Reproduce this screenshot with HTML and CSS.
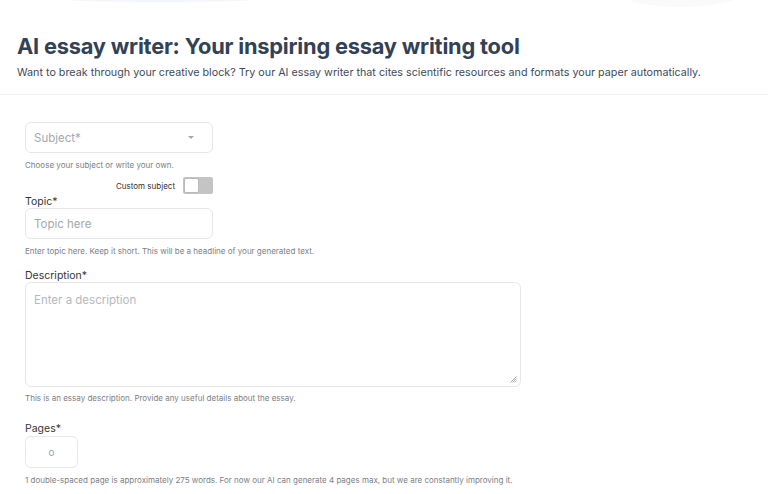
FILE: index.html
```html
<!DOCTYPE html>
<html lang="en">
<head>
<meta charset="utf-8">
<title>AI essay writer</title>
<link rel="stylesheet" href="styles.css">
</head>
<body>
<header class="hero">
  <h1 class="title">AI essay writer: Your inspiring essay writing tool</h1>
  <p class="lead">Want to break through your creative block? Try our AI essay writer that cites scientific resources and formats your paper automatically.</p>
</header>
<main class="form">
  <div class="field">
    <div class="select">
      <span class="placeholder">Subject*</span>
      <svg class="caret" width="6" height="3" viewBox="0 0 6 3"><path d="M0 0h6L3 3z" fill="#a3a7ad"/></svg>
    </div>
    <p class="hint">Choose your subject or write your own.</p>
  </div>
  <div class="toggle-row">
    <span class="toggle-label">Custom subject</span>
    <span class="toggle"><span class="knob"></span></span>
  </div>
  <div class="field">
    <label class="label label-tight">Topic*</label>
    <div class="input"><span class="placeholder">Topic here</span></div>
    <p class="hint">Enter topic here. Keep it short. This will be a headline of your generated text.</p>
  </div>
  <div class="field">
    <label class="label">Description*</label>
    <div class="textarea">
      <span class="placeholder">Enter a description</span>
      <svg class="grip" width="7" height="7" viewBox="0 0 7 7"><path d="M6.5 0.5L0.5 6.5M6.5 2.5L2.5 6.5M6.5 4.5L4.5 6.5" stroke="#a0a0a0" stroke-width="0.9"/></svg>
    </div>
    <p class="hint">This is an essay description. Provide any useful details about the essay.</p>
  </div>
  <div class="field field-pages">
    <label class="label">Pages*</label>
    <div class="pages"><span class="placeholder small">o</span></div>
    <p class="hint hint-pages">1 double-spaced page is approximately 275 words. For now our AI can generate 4 pages max, but we are constantly improving it.</p>
  </div>
</main>
</body>
</html>
```
FILE: styles.css
```css
* { box-sizing: border-box; }
html, body { margin: 0; padding: 0; background: #fff; }
body {
  font-family: Inter, "Noto Sans", sans-serif;
  width: 768px;
  height: 494px;
  overflow: hidden;
  position: relative;
}
body::before {
  content: "";
  position: absolute;
  right: 22px;
  top: -26px;
  width: 130px;
  height: 33px;
  border-radius: 50%;
  background: #fafafb;
}
body::after {
  content: "";
  position: absolute;
  left: 65px;
  top: -3px;
  width: 190px;
  height: 5px;
  border-radius: 50%;
  background: #f3f6fb;
}
.hero {
  padding: 33px 0 0 17px;
  height: 95px;
  border-bottom: 1px solid #eef0f3;
}
.title {
  margin: 0;
  font-size: 21.8px;
  font-weight: 700;
  line-height: 26px;
  color: #334155;
  letter-spacing: -0.2px;
}
.lead {
  margin: 6px 0 0;
  font-size: 10.75px;
  line-height: 16px;
  color: #3f4a5a;
}
.form {
  padding: 27px 0 0 25px;
}
.field { display: flex; flex-direction: column; }
.select, .input {
  width: 188px;
  height: 31px;
  border: 1px solid #e6e7ea;
  border-radius: 6px;
  display: flex;
  align-items: center;
  padding: 0 0 0 8px;
}
.select { justify-content: space-between; padding-right: 18px; }
.placeholder {
  font-size: 11.5px;
  color: #a4a8ae;
}
.hint {
  margin: 0;
  font-size: 8px;
  line-height: 12px;
  color: #7b7f85;
}
.select + .hint { margin-top: 6px; }
.toggle-row {
  width: 188px;
  display: flex;
  justify-content: flex-end;
  align-items: center;
  gap: 8px;
  margin-top: 6px;
  height: 17px;
}
.toggle-label { font-size: 8px; color: #2f2f2f; }
.toggle {
  width: 30px;
  height: 17px;
  background: #c4c4c4;
  border-radius: 2px;
  display: flex;
  padding: 1px;
}
.knob {
  width: 15px;
  height: 15px;
  background: #fff;
  border: 1px solid #b9b9b9;
  border-radius: 2px;
}
.label {
  font-size: 10.5px;
  color: #363636;
  line-height: 12px;
  margin: 13px 0 0;
}
.label-tight { margin: 2px 0 0; }
.input + .hint { margin-top: 6px; }
.textarea {
  width: 496px;
  height: 105px;
  border: 1px solid #e6e7ea;
  border-radius: 6px;
  position: relative;
  padding: 5px 0 0 8px;
}
.textarea .placeholder { color: #b6b9bd; }
.grip { position: absolute; right: 3px; bottom: 3px; }
.textarea + .hint { margin-top: 5px; }
.field-pages .label { margin: 19px 0 1px; }
.pages {
  width: 53px;
  height: 32px;
  border: 1px solid #e6e7ea;
  border-radius: 6px;
  display: flex;
  align-items: center;
  justify-content: center;
}
.placeholder.small { font-size: 10px; color: #9aa0a6; }
.hint-pages { margin-top: 6px; }
```
